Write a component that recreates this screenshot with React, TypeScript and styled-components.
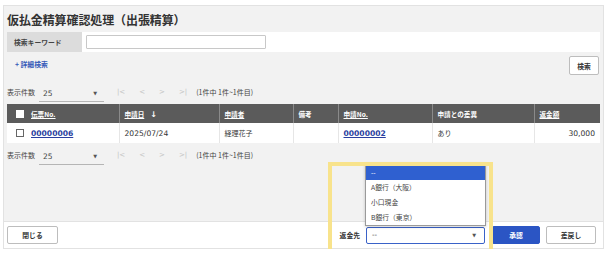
import React from "react";
import styled, { createGlobalStyle, css } from "styled-components";

const GlobalStyle = createGlobalStyle`
  html, body { margin: 0; padding: 0; background: #ffffff; }
  body {
    font-family: "DejaVu Sans", "Noto Sans CJK JP", sans-serif;
    color: #333333;
    font-size: 8px;
  }
  * { box-sizing: border-box; }
`;

const Panel = styled.div`
  position: relative;
  margin: 5px 0 0 3px;
  width: 601px;
  height: 244px;
  border: 1px solid #e2e2e2;
  display: flex;
  flex-direction: column;
`;

const Main = styled.div`
  flex: 1;
  background: #f2f2f2;
  padding: 0 3px 0 3px;
  display: flex;
  flex-direction: column;
`;

const Title = styled.h1`
  margin: 0;
  height: 26px;
  display: flex;
  align-items: center;
  font-family: "Noto Sans CJK JP", sans-serif;
  font-size: 12px;
  font-weight: 700;
  color: #333;
  letter-spacing: -0.1px;
`;

const SearchRow = styled.div`
  display: flex;
  align-items: center;
  height: 20px;
  background: #ffffff;
`;

const SearchLabel = styled.div`
  width: 75px;
  height: 100%;
  background: #dcdcdc;
  display: flex;
  align-items: center;
  padding-left: 7px;
  font-family: "Noto Sans CJK JP", sans-serif;
  font-size: 6.8px;
  font-weight: 700;
  color: #444;
`;

const KeywordInput = styled.input`
  margin-left: 4px;
  width: 180px;
  height: 14px;
  border: 1px solid #c8c8c8;
  border-radius: 1px;
  background: #fff;
  outline: none;
`;

const ActionRow = styled.div`
  height: 28px;
  display: flex;
  align-items: flex-start;
  justify-content: space-between;
`;

const DetailLink = styled.a`
  margin-top: 7px;
  padding-left: 8px;
  font-family: "Noto Sans CJK JP", sans-serif;
  font-size: 6.8px;
  font-weight: 700;
  color: #3559b8;
  text-decoration: none;
`;

const Button = styled.button<{ $primary?: boolean; $w: number; $mr?: number }>`
  width: ${(p) => p.$w}px;
  height: 18px;
  margin-right: ${(p) => p.$mr ?? 0}px;
  border-radius: 2px;
  font-family: "Noto Sans CJK JP", sans-serif;
  font-size: 6.8px;
  font-weight: 700;
  cursor: pointer;
  padding: 0;
  ${(p) =>
    p.$primary
      ? css`
          background: #2b55c4;
          border: 1px solid #2b55c4;
          color: #fff;
        `
      : css`
          background: #fff;
          border: 1px solid #bdbdbd;
          color: #333;
        `}
`;

const SearchButton = styled(Button)`
  margin-top: 4px;
  margin-right: 1px;
  height: 19px;
`;

const Pager = styled.div`
  height: 24px;
  display: flex;
  align-items: center;
  font-family: "Noto Sans CJK JP", sans-serif;
  font-size: 7px;
  color: #444;
`;

const PagerLabel = styled.span`
  width: 32px;
`;

const CountSelect = styled.div`
  position: relative;
  width: 65px;
  height: 17px;
  margin-top: 3px;
  border-bottom: 1px solid #b5b5b5;
  display: flex;
  align-items: center;
  justify-content: space-between;
  padding: 0 7px 0 4px;
  font-family: "DejaVu Sans", sans-serif;
  font-size: 7.5px;
`;

const Caret = styled.span`
  font-size: 5px;
  color: #555;
`;

const NavIcon = styled.span<{ $ml: number }>`
  margin-left: ${(p) => p.$ml}px;
  color: #c4c4c4;
  font-family: "DejaVu Sans", sans-serif;
  font-size: 7px;
`;

const PageInfo = styled.span`
  margin-left: 9px;
  font-size: 7px;
  color: #444;
`;

const Table = styled.table`
  border-collapse: collapse;
  table-layout: fixed;
  width: 593px;
`;

const HeadCell = styled.th<{ $w: number; $link?: boolean }>`
  width: ${(p) => p.$w}px;
  height: 19px;
  background: #5b5b5b;
  color: #fff;
  font-family: "Noto Sans CJK JP", sans-serif;
  font-size: 6.6px;
  font-weight: 700;
  text-align: left;
  padding: 0 5px;
  border-left: 1px solid #8a8a8a;
  text-decoration: ${(p) => (p.$link ? "underline" : "none")};
  &:first-child { border-left: none; }
`;

const HeadLinkText = styled.span`
  text-decoration: underline;
`;

const Cell = styled.td<{ $right?: boolean }>`
  height: 20px;
  background: #fff;
  padding: 0 5px;
  font-family: "DejaVu Sans", "Noto Sans CJK JP", sans-serif;
  font-size: 7.6px;
  color: #333;
  border-left: 1px solid #e6e6e6;
  text-align: ${(p) => (p.$right ? "right" : "left")};
  &:first-child { border-left: none; }
`;

const CjkText = styled.span`
  font-family: "Noto Sans CJK JP", sans-serif;
  font-size: 7px;
`;

const FirstCellInner = styled.div`
  display: flex;
  align-items: center;
  gap: 7px;
  padding-left: 4px;
`;

const Check = styled.span<{ $filled?: boolean }>`
  width: 8px;
  height: 8px;
  display: inline-block;
  background: #fff;
  border: 1px solid ${(p) => (p.$filled ? "#fff" : "#666")};
`;

const RowLink = styled.a`
  color: #2a3fa0;
  font-weight: 700;
  text-decoration: underline;
  font-size: 7.6px;
`;

const Arrow = styled.span`
  margin-left: 6px;
  font-family: "DejaVu Sans", sans-serif;
  font-size: 8px;
  text-decoration: none;
  display: inline-block;
`;

const Footer = styled.div`
  height: 27px;
  background: #fff;
  border-top: 1px solid #e2e2e2;
  display: flex;
  align-items: center;
  justify-content: space-between;
  padding: 0 7px 0 3px;
`;

const RightGroup = styled.div`
  display: flex;
  align-items: center;
`;

const RefundLabel = styled.span`
  font-family: "Noto Sans CJK JP", sans-serif;
  font-size: 6.8px;
  font-weight: 700;
  margin-right: 6px;
  color: #333;
`;

const SelectWrap = styled.div`
  position: relative;
  width: 119px;
  height: 17px;
  margin-right: 7px;
`;

const RefundSelect = styled.div`
  width: 100%;
  height: 100%;
  border: 1px solid #3a62c8;
  border-radius: 2px;
  background: #fff;
  display: flex;
  align-items: center;
  justify-content: space-between;
  padding: 0 8px 0 5px;
  font-size: 7px;
`;

const DropList = styled.ul`
  position: absolute;
  left: -1px;
  bottom: calc(100% + 1px);
  width: 121px;
  margin: 0;
  padding: 0;
  list-style: none;
  background: #fff;
  border: 1px solid #9a9a9a;
  box-shadow: 0 1px 3px rgba(0, 0, 0, 0.2);
  z-index: 2;
`;

const DropItem = styled.li<{ $active?: boolean }>`
  height: ${(p) => (p.$active ? 16 : 15)}px;
  display: flex;
  align-items: center;
  padding-left: 5px;
  font-family: "Noto Sans CJK JP", sans-serif;
  font-size: 6.8px;
  background: ${(p) => (p.$active ? "#2f60d0" : "#fff")};
  color: ${(p) => (p.$active ? "#fff" : "#444")};
`;

const Highlight = styled.div`
  position: absolute;
  left: 324px;
  top: 156px;
  width: 165px;
  height: 92px;
  border: 4px solid #f8e38c;
  pointer-events: none;
  z-index: 3;
`;

const columns = [
  { label: "伝票No.", w: 112, link: true },
  { label: "申請日", w: 100, link: true, arrow: true },
  { label: "申請者", w: 74, link: true },
  { label: "備考", w: 45 },
  { label: "申請No.", w: 94, link: true },
  { label: "申請との差異", w: 102 },
  { label: "返金額", w: 66, link: true },
];

function PagerBar() {
  return (
    <Pager>
      <PagerLabel>表示件数</PagerLabel>
      <CountSelect>
        <span>25</span>
        <Caret>▼</Caret>
      </CountSelect>
      <NavIcon $ml={13}>|&lt;</NavIcon>
      <NavIcon $ml={14}>&lt;</NavIcon>
      <NavIcon $ml={14}>&gt;</NavIcon>
      <NavIcon $ml={14}>&gt;|</NavIcon>
      <PageInfo>(1件中 1件~1件目)</PageInfo>
    </Pager>
  );
}

export default function App() {
  return (
    <>
      <GlobalStyle />
      <Panel>
        <Main>
          <Title>仮払金精算確認処理（出張精算）</Title>
          <SearchRow>
            <SearchLabel>検索キーワード</SearchLabel>
            <KeywordInput />
          </SearchRow>
          <ActionRow>
            <DetailLink>+ 詳細検索</DetailLink>
            <SearchButton $w={30}>検索</SearchButton>
          </ActionRow>
          <PagerBar />
          <Table>
            <thead>
              <tr>
                {columns.map((c, i) => (
                  <HeadCell key={c.label} $w={c.w} $link={c.link}>
                    {i === 0 ? (
                      <FirstCellInner>
                        <Check $filled />
                        <HeadLinkText>{c.label}</HeadLinkText>
                      </FirstCellInner>
                    ) : (
                      <>
                        {c.label}
                        {c.arrow && <Arrow>↓</Arrow>}
                      </>
                    )}
                  </HeadCell>
                ))}
              </tr>
            </thead>
            <tbody>
              <tr>
                <Cell>
                  <FirstCellInner>
                    <Check />
                    <RowLink>00000006</RowLink>
                  </FirstCellInner>
                </Cell>
                <Cell>2025/07/24</Cell>
                <Cell>
                  <CjkText>経理花子</CjkText>
                </Cell>
                <Cell />
                <Cell>
                  <RowLink>00000002</RowLink>
                </Cell>
                <Cell>
                  <CjkText>あり</CjkText>
                </Cell>
                <Cell $right>30,000</Cell>
              </tr>
            </tbody>
          </Table>
          <PagerBar />
        </Main>
        <Footer>
          <Button $w={51}>閉じる</Button>
          <RightGroup>
            <RefundLabel>返金先</RefundLabel>
            <SelectWrap>
              <DropList>
                <DropItem $active>--</DropItem>
                <DropItem>A銀行（大阪）</DropItem>
                <DropItem>小口現金</DropItem>
                <DropItem>B銀行（東京）</DropItem>
              </DropList>
              <RefundSelect>
                <span>--</span>
                <Caret>▼</Caret>
              </RefundSelect>
            </SelectWrap>
            <Button $primary $w={48} $mr={6}>
              承認
            </Button>
            <Button $w={50}>差戻し</Button>
          </RightGroup>
        </Footer>
        <Highlight />
      </Panel>
    </>
  );
}
